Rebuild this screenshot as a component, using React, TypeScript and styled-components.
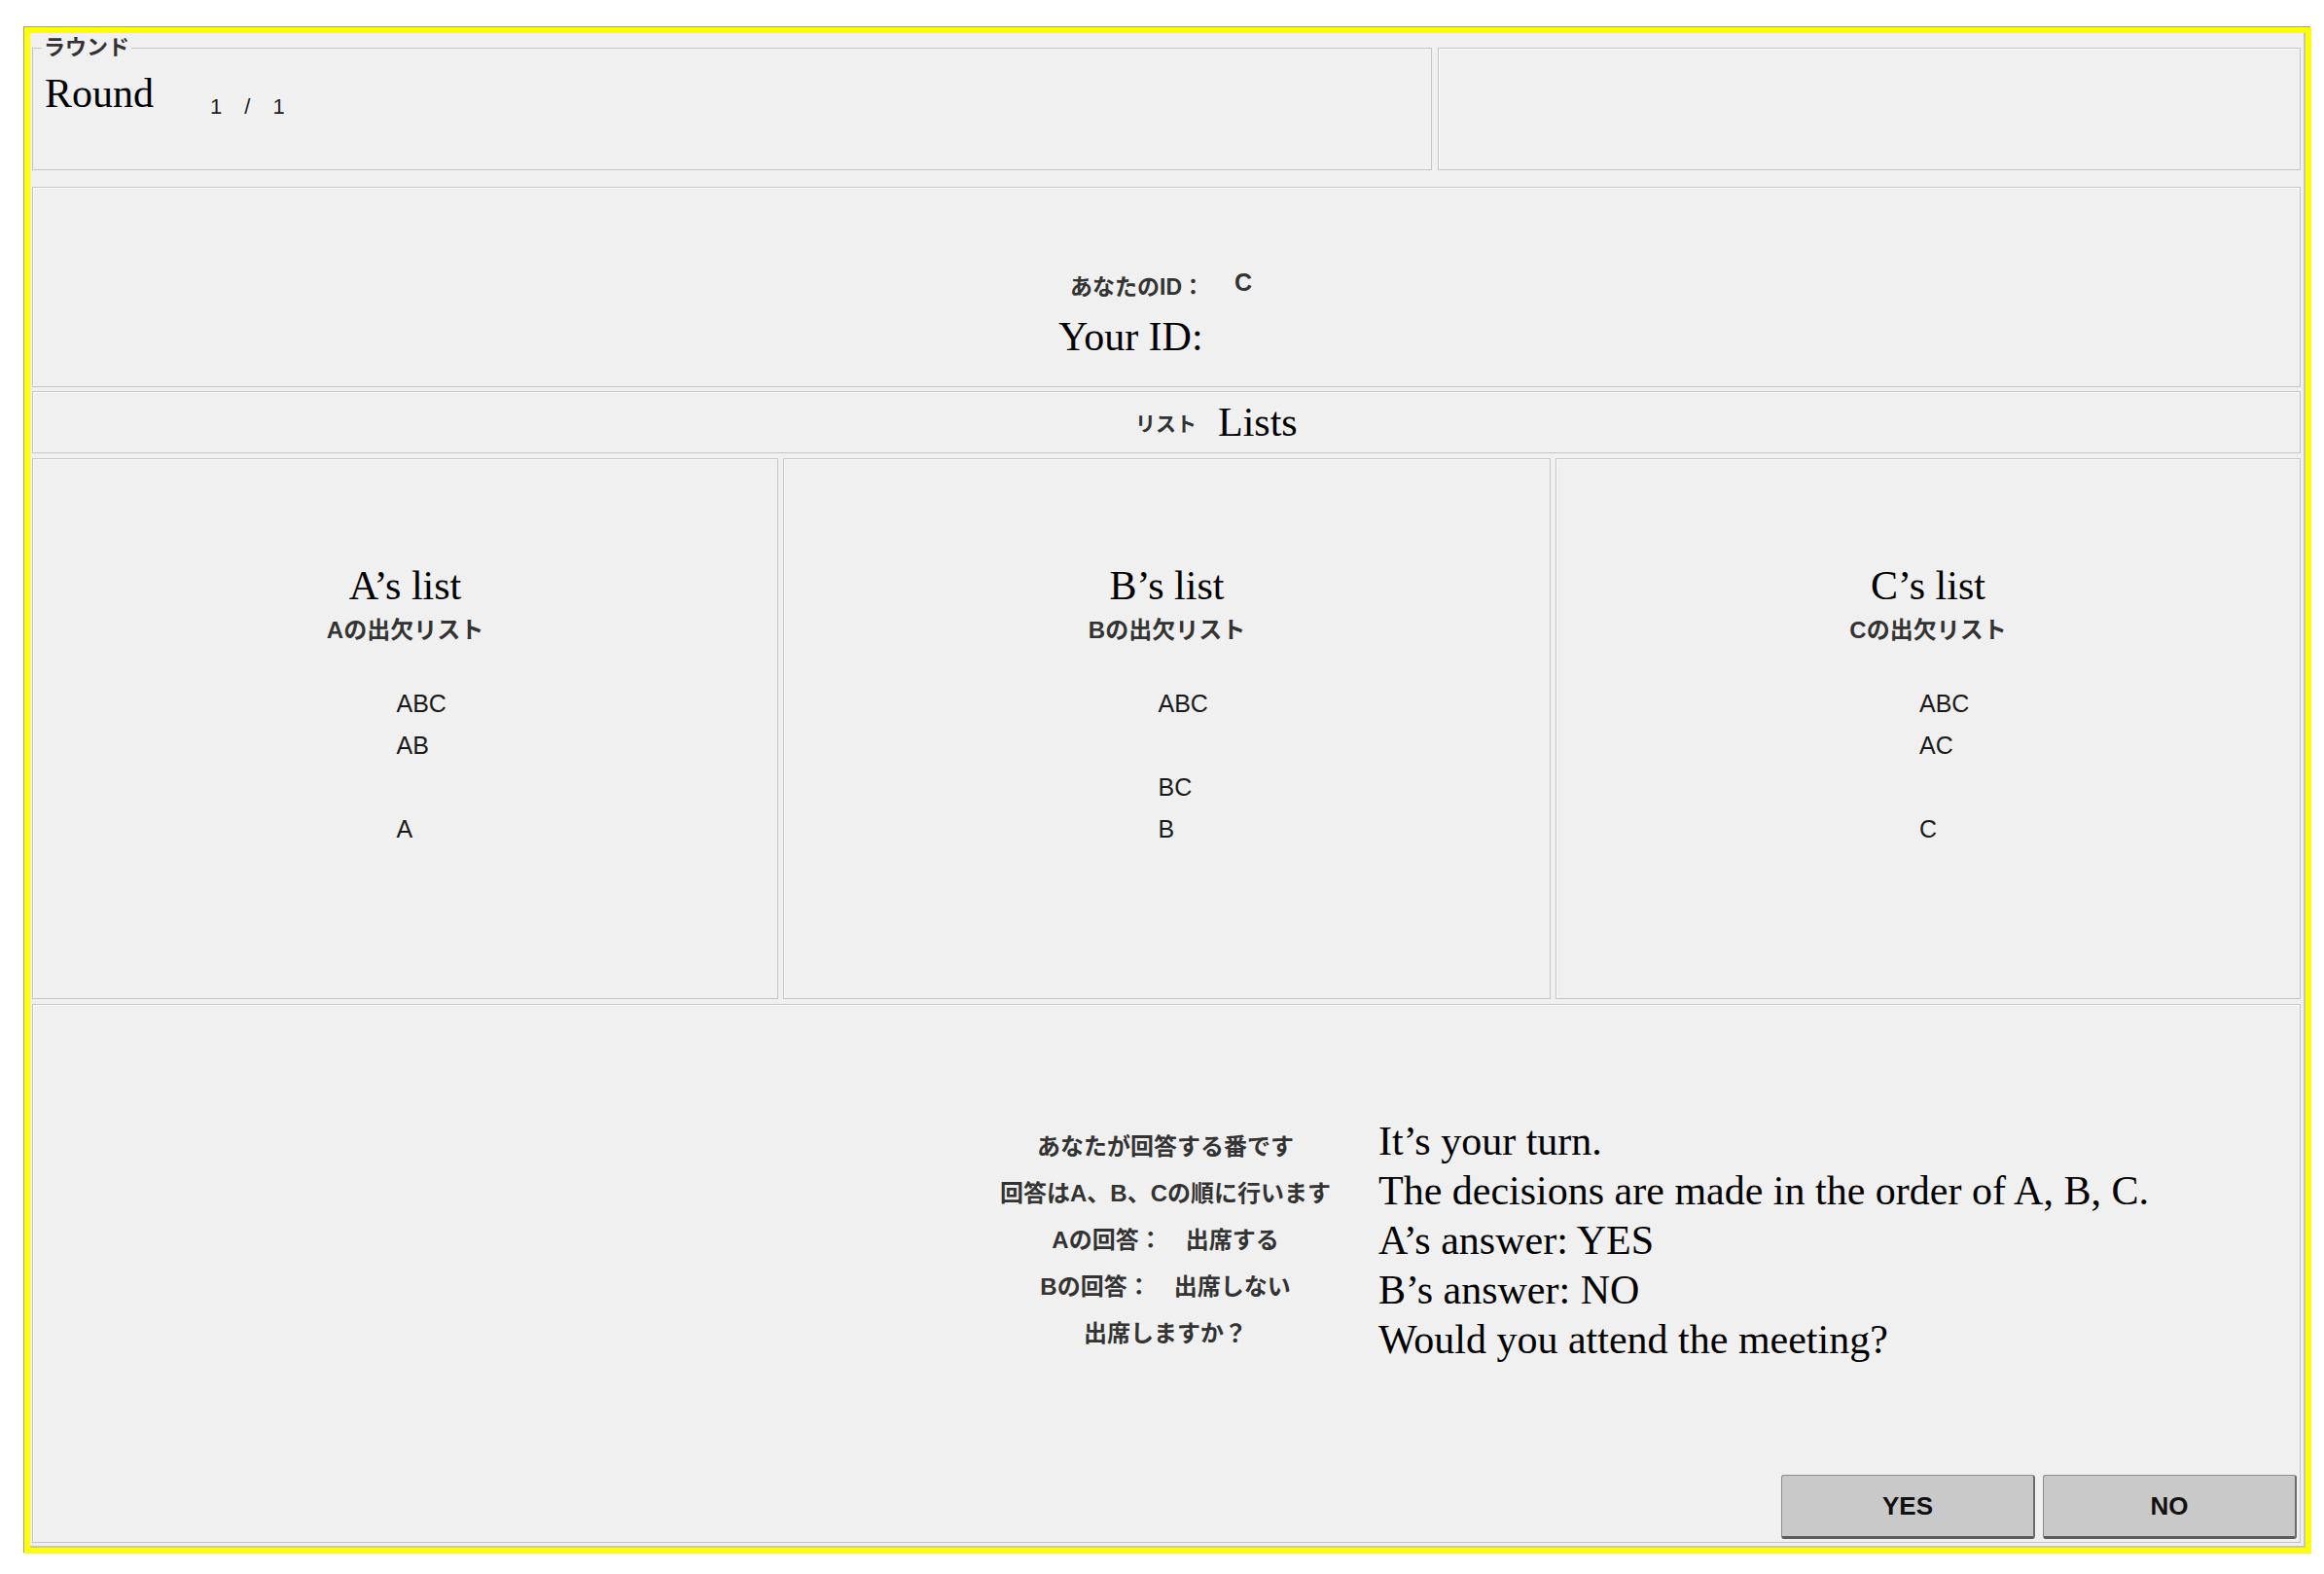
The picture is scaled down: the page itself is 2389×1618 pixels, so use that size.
import styled, { createGlobalStyle } from "styled-components";

const GlobalStyle = createGlobalStyle`
  html, body {
    margin: 0;
    padding: 0;
    background: #ffffff;
  }
  body {
    font-family: "Liberation Sans", "Noto Sans CJK JP", sans-serif;
    color: #222;
  }
  * {
    box-sizing: border-box;
  }
`;

const serif = `"Liberation Serif", "Times New Roman", serif`;
const gothic = `"Liberation Sans", "Noto Sans CJK JP", sans-serif`;

// the whole dialog, with the yellow highlight round it
const Frame = styled.div`
  width: 2351px;
  height: 1569px;
  margin: 28px 0 0 25px;
  border: 6px solid #ffff00;
  box-shadow: -1px -1px 0 #9c9c9c, inset -2px -2px 0 #c4c4c4;
  background: #f0f0f0;
  padding: 2px 5px 5px 2px;
  display: flex;
  flex-direction: column;
`;

const Panel = styled.div`
  border: 1px solid #c6c6c6;
  box-shadow: inset 1px 1px 0 #fbfbfb;
  background: #f0f0f0;
`;

const TopRow = styled.div`
  display: flex;
  align-items: flex-end;
  gap: 6px;
  height: 139px;
`;

const RoundBox = styled.fieldset`
  margin: 0;
  width: 1439px;
  height: 139px;
  padding: 0 12px;
  border: 1px solid #c6c6c6;
`;

const Legend = styled.legend`
  padding: 0 2px;
  margin-left: -3px;
  font-family: ${gothic};
  font-size: 22px;
  font-weight: 700;
  line-height: 26px;
  color: #333;
`;

const RoundRow = styled.div`
  display: flex;
  align-items: flex-start;
  gap: 58px;
  margin-top: 10px;
`;

const SerifText = styled.div<{ $size?: number; $line?: number }>`
  font-family: ${serif};
  font-size: ${(p) => p.$size ?? 42}px;
  line-height: ${(p) => p.$line ?? 48}px;
  color: #000;
  white-space: nowrap;
`;

const Counter = styled.div`
  margin-top: 25px;
  font-size: 22px;
  line-height: 26px;
  word-spacing: 17px;
  color: #222;
`;

const EmptyBox = styled(Panel)`
  flex: 1;
  height: 126px;
`;

const IdPanel = styled(Panel)`
  height: 206px;
  margin-top: 17px;
  padding: 85px 0 0 1054px;
`;

const IdRow = styled.div`
  display: flex;
  align-items: center;
  gap: 31px;
  margin-left: 12px;
  height: 30px;
`;

const JpLabel = styled.span<{ $size?: number }>`
  font-family: ${gothic};
  font-size: ${(p) => p.$size ?? 21}px;
  font-weight: 700;
  color: #333;
  white-space: nowrap;
`;

const IdValue = styled.span`
  font-size: 25px;
  font-weight: 700;
  color: #333;
  margin-top: -6px;
`;

const YourId = styled(SerifText)`
  margin-top: 14px;
`;

const ListsHeader = styled(Panel)`
  height: 64px;
  margin-top: 4px;
  display: flex;
  align-items: center;
  gap: 22px;
  padding-left: 1133px;
`;

const Columns = styled.div`
  display: grid;
  grid-template-columns: 767px 789px 1fr;
  gap: 5px;
  height: 556px;
  margin-top: 5px;
`;

const ListColumn = styled(Panel)`
  display: flex;
  flex-direction: column;
  align-items: center;
  padding-top: 106px;
`;

const ListSub = styled(JpLabel)`
  line-height: 30px;
  margin-top: 7px;
`;

const Items = styled.div`
  align-self: stretch;
  padding-left: calc(50% - 9px);
  margin-top: 39px;
`;

const Item = styled.div`
  font-size: 25px;
  line-height: 43px;
  height: 43px;
  color: #1a1a1a;
`;

const BottomPanel = styled(Panel)`
  flex: 1;
  margin-top: 5px;
  display: flex;
  flex-direction: column;
  padding-top: 115px;
`;

const Messages = styled.div`
  display: flex;
  align-items: flex-start;
  padding-left: 984px;
`;

const JpColumn = styled.div`
  width: 360px;
  margin-top: 7px;
  text-align: center;
  font-family: ${gothic};
  font-size: 24px;
  font-weight: 700;
  line-height: 48px;
  color: #333;
  white-space: nowrap;
`;

const EnColumn = styled.div`
  margin-left: 39px;
`;

const Buttons = styled.div`
  margin-top: auto;
  display: flex;
  justify-content: flex-end;
  gap: 8px;
  padding: 0 3px 3px 0;
`;

const Button = styled.button`
  width: 261px;
  height: 66px;
  background: #c9c9c9;
  border: 1px solid #8c8c8c;
  border-right: 2px solid #6c6c6c;
  border-bottom: 3px solid #5c5c5c;
  border-radius: 3px;
  font-family: ${gothic};
  font-size: 26px;
  font-weight: 700;
  color: #111;
  padding: 0;
`;

const lists = [
  { owner: "A", items: ["ABC", "AB", "", "A"] },
  { owner: "B", items: ["ABC", "", "BC", "B"] },
  { owner: "C", items: ["ABC", "AC", "", "C"] },
];

const jpLines = [
  "あなたが回答する番です",
  "回答はA、B、Cの順に行います",
  "Aの回答：　出席する",
  "Bの回答：　出席しない",
  "出席しますか？",
];

const enLines = [
  "It\u2019s your turn.",
  "The decisions are made in the order of A, B, C.",
  "A\u2019s answer: YES",
  "B\u2019s answer: NO",
  "Would you attend the meeting?",
];

const App = () => {
  return (
    <>
      <GlobalStyle />
      <Frame>
        <TopRow>
          <RoundBox>
            <Legend>ラウンド</Legend>
            <RoundRow>
              <SerifText>Round</SerifText>
              <Counter>1 / 1</Counter>
            </RoundRow>
          </RoundBox>
          <EmptyBox />
        </TopRow>

        <IdPanel>
          <IdRow>
            <JpLabel $size={23}>あなたのID：</JpLabel>
            <IdValue>C</IdValue>
          </IdRow>
          <YourId>Your ID:</YourId>
        </IdPanel>

        <ListsHeader>
          <JpLabel>リスト</JpLabel>
          <SerifText>Lists</SerifText>
        </ListsHeader>

        <Columns>
          {lists.map((list) => (
            <ListColumn key={list.owner}>
              <SerifText>{list.owner}&rsquo;s list</SerifText>
              <ListSub $size={24}>{list.owner}の出欠リスト</ListSub>
              <Items>
                {list.items.map((item, i) => (
                  <Item key={i}>{item}</Item>
                ))}
              </Items>
            </ListColumn>
          ))}
        </Columns>

        <BottomPanel>
          <Messages>
            <JpColumn>
              {jpLines.map((line) => (
                <div key={line}>{line}</div>
              ))}
            </JpColumn>
            <EnColumn>
              {enLines.map((line) => (
                <SerifText key={line} $line={51}>
                  {line}
                </SerifText>
              ))}
            </EnColumn>
          </Messages>
          <Buttons>
            <Button>YES</Button>
            <Button>NO</Button>
          </Buttons>
        </BottomPanel>
      </Frame>
    </>
  );
};

export default App;
